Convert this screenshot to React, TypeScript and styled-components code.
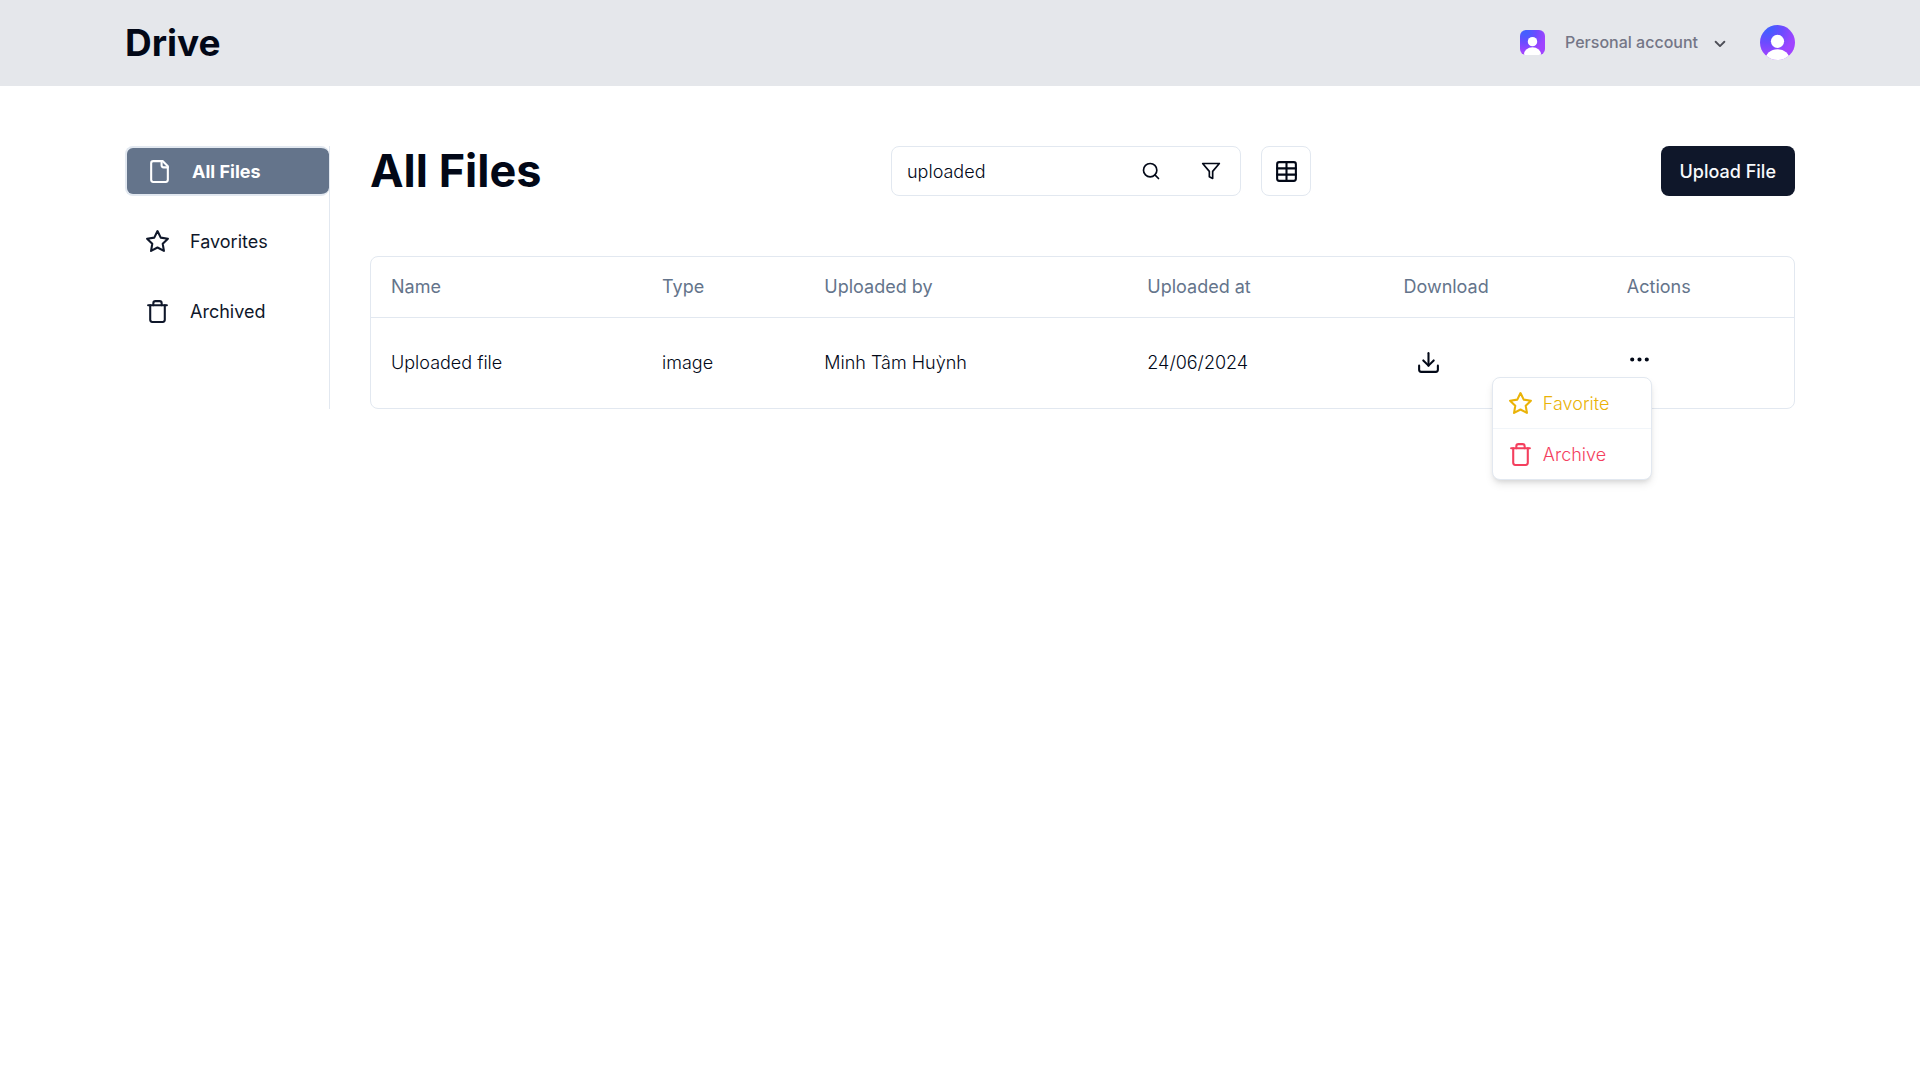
import React, { useId, useState } from "react";
import styled, { createGlobalStyle } from "styled-components";

const color = {
  ink: "#020817",
  navy: "#0f172a",
  slate: "#64748b",
  line: "#e2e8f0",
  faint: "#f1f5f9",
  header: "#e5e7eb",
  yellow: "#eab308",
  rose: "#f43f5e",
};

const GlobalStyle = createGlobalStyle`
  *, *::before, *::after { box-sizing: border-box; }
  body {
    margin: 0;
    background: #fff;
    color: ${color.ink};
    font-family: Inter, "Liberation Sans", sans-serif;
    font-size: 18px;
    line-height: 25px;
  }
  button, input { font: inherit; color: inherit; }
  button { cursor: pointer; }
  h1, ul { margin: 0; padding: 0; }
  svg { display: block; flex: none; }
`;

const Shell = styled.div`
  min-height: 100vh;
`;

const Container = styled.div`
  width: 100%;
  max-width: 1750px;
  margin: 0 auto;
  padding: 0 40px;
`;

const Header = styled.header`
  border-bottom: 1px solid ${color.header};
  background: ${color.header};
`;

const HeaderRow = styled(Container)`
  display: flex;
  align-items: center;
  justify-content: space-between;
  min-height: 85px;
`;

const Brand = styled.a`
  color: ${color.ink};
  font-size: 37px;
  font-weight: 700;
  line-height: 45px;
  text-decoration: none;
`;

const Account = styled.div`
  display: flex;
  align-items: center;
  gap: 25px;
`;

const BareButton = styled.button`
  display: inline-flex;
  align-items: center;
  padding: 0;
  border: 0;
  background: none;
`;

const AccountSwitch = styled(BareButton)`
  gap: 20px;
  padding: 5px;
  color: #747686;
  font-size: 16px;
  font-weight: 500;
`;

const AccountName = styled.span`
  display: flex;
  align-items: center;
  gap: 12px;
`;

const Picture = styled.span<{ $size: number; $radius: string }>`
  display: block;
  width: ${(p) => p.$size}px;
  height: ${(p) => p.$size}px;
  border-radius: ${(p) => p.$radius};
  overflow: hidden;
`;

const Page = styled(Container)`
  display: flex;
  gap: 40px;
  padding-top: 60px;
`;

const Sidebar = styled.nav`
  flex: none;
  width: 205px;
  border-right: 1px solid ${color.line};
`;

const NavList = styled.ul`
  display: grid;
  gap: 20px;
  list-style: none;
`;

const NavLink = styled.a<{ $active?: boolean }>`
  display: flex;
  align-items: center;
  gap: 20px;
  height: 50px;
  padding: 0 20px;
  border: ${(p) => (p.$active ? `2px solid ${color.line}` : "0")};
  border-right: 0;
  border-radius: 8px;
  background: ${(p) => (p.$active ? color.slate : "transparent")};
  color: ${(p) => (p.$active ? "#fff" : color.navy)};
  font-weight: ${(p) => (p.$active ? 700 : 400)};
  text-decoration: none;
`;

const Main = styled.main`
  flex: 1;
  min-width: 0;
`;

const Toolbar = styled.div`
  display: flex;
  align-items: center;
  justify-content: space-between;
  height: 50px;
  margin-bottom: 60px;
`;

const Title = styled.h1`
  font-size: 45px;
  font-weight: 700;
  line-height: 50px;
`;

const Tools = styled.div`
  display: flex;
  gap: 20px;
`;

const SearchBox = styled.form`
  display: flex;
  align-items: center;
  gap: 10px;
  width: 350px;
  height: 50px;
  padding: 0 4px 0 15px;
  border: 1px solid ${color.line};
  border-radius: 8px;
`;

const SearchInput = styled.input`
  flex: 1;
  min-width: 0;
  padding: 0;
  border: 0;
  outline: 0;
  background: none;
  font-weight: 300;
`;

const IconButton = styled(BareButton)<{ $outlined?: boolean }>`
  justify-content: center;
  width: 50px;
  height: 50px;
  border: ${(p) => (p.$outlined ? `1px solid ${color.line}` : "0")};
  border-radius: 8px;
`;

const UploadButton = styled(BareButton)`
  height: 50px;
  padding: 0 19px;
  border-radius: 8px;
  background: ${color.navy};
  color: #f8fafc;
  font-weight: 500;
`;

const TableFrame = styled.div`
  border: 1px solid ${color.line};
  border-radius: 8px;
`;

const FileTable = styled.table`
  width: 100%;
  border-collapse: separate;
  border-spacing: 0;
  table-layout: fixed;
`;

const Col = styled.col<{ $share: string }>`
  width: ${(p) => p.$share};
`;

const HeadCell = styled.th`
  height: 61px;
  padding: 0 20px 2px;
  border-bottom: 1px solid ${color.line};
  color: ${color.slate};
  font-weight: 400;
  text-align: left;
`;

const Cell = styled.td`
  height: 90px;
  padding: 0 20px 2px;
  font-weight: 300;
  text-align: left;
  vertical-align: middle;
`;

const MenuAnchor = styled.div`
  position: relative;
  display: flex;
  width: 25px;
  height: 30px;
`;

const MenuTrigger = styled(BareButton)`
  align-items: flex-start;
`;

const Menu = styled.div`
  position: absolute;
  top: 100%;
  right: 0;
  width: 160px;
  padding: 5px;
  border: 1px solid ${color.line};
  border-radius: 8px;
  background: #fff;
  box-shadow: 0 5px 8px -1px rgba(0, 0, 0, 0.1), 0 3px 5px -2px rgba(0, 0, 0, 0.1);
`;

const MenuItem = styled(BareButton)<{ $tone: string }>`
  display: flex;
  gap: 10px;
  width: 100%;
  height: 40px;
  padding: 0 10px;
  color: ${(p) => p.$tone};
  font-weight: 300;
`;

const MenuRule = styled.hr`
  height: 1px;
  margin: 5px -5px;
  border: 0;
  background: ${color.faint};
`;

type GlyphProps = { size?: number; children: React.ReactNode };

const Glyph = ({ size = 25, children }: GlyphProps) => (
  <svg
    width={size}
    height={size}
    viewBox="0 0 24 24"
    fill="none"
    stroke="currentColor"
    strokeWidth="2"
    strokeLinecap="round"
    strokeLinejoin="round"
    aria-hidden="true"
  >
    {children}
  </svg>
);

const FileIcon = () => (
  <Glyph>
    <path d="M15 2H6a2 2 0 0 0-2 2v16a2 2 0 0 0 2 2h12a2 2 0 0 0 2-2V7Z" />
    <path d="M14 2v4a2 2 0 0 0 2 2h4" />
  </Glyph>
);

const StarIcon = () => (
  <Glyph>
    <polygon points="12 2 15.09 8.26 22 9.27 17 14.14 18.18 21.02 12 17.77 5.82 21.02 7 14.14 2 9.27 8.91 8.26 12 2" />
  </Glyph>
);

const TrashIcon = () => (
  <Glyph>
    <path d="M3 6h18" />
    <path d="M19 6v14c0 1-1 2-2 2H7c-1 0-2-1-2-2V6" />
    <path d="M8 6V4c0-1 1-2 2-2h4c1 0 2 1 2 2v2" />
  </Glyph>
);

const SearchIcon = () => (
  <Glyph size={20}>
    <circle cx="11" cy="11" r="8" />
    <path d="m21 21-4.3-4.3" />
  </Glyph>
);

const FilterIcon = () => (
  <Glyph size={20}>
    <polygon points="22 3 2 3 10 12.46 10 19 14 21 14 12.46 22 3" />
  </Glyph>
);

const TableIcon = () => (
  <Glyph>
    <path d="M12 3v18" />
    <rect width="18" height="18" x="3" y="3" rx="2" />
    <path d="M3 9h18" />
    <path d="M3 15h18" />
  </Glyph>
);

const DownloadIcon = () => (
  <Glyph>
    <path d="M21 15v4a2 2 0 0 1-2 2H5a2 2 0 0 1-2-2v-4" />
    <polyline points="7 10 12 15 17 10" />
    <line x1="12" x2="12" y1="15" y2="3" />
  </Glyph>
);

const DotsIcon = () => (
  <Glyph>
    <circle cx="12" cy="12" r="1" fill="currentColor" />
    <circle cx="19" cy="12" r="1" fill="currentColor" />
    <circle cx="5" cy="12" r="1" fill="currentColor" />
  </Glyph>
);

const ChevronIcon = () => (
  <svg width="20" height="20" viewBox="0 0 16 16" fill="none" stroke="#4d4f57" strokeWidth="1.5" strokeLinecap="round" strokeLinejoin="round" aria-hidden="true">
    <path d="m4.5 7 3.5 3.5L11.5 7" />
  </svg>
);

const Avatar = ({ size, radius }: { size: number; radius: string }) => {
  const id = useId();
  return (
    <Picture $size={size} $radius={radius}>
      <svg width={size} height={size} viewBox="0 0 35 35" aria-hidden="true">
        <defs>
          <radialGradient id={id} cx="0.22" cy="0.08" r="0.95">
            <stop offset="0.1" stopColor="#455eff" />
            <stop offset="0.45" stopColor="#6c4bff" />
            <stop offset="0.85" stopColor="#a044ff" />
          </radialGradient>
        </defs>
        <rect width="35" height="35" fill={`url(#${id})`} />
        <circle cx="17.5" cy="16.3" r="6.6" fill="#fff" />
        <ellipse cx="17.5" cy="35" rx="12.2" ry="10.8" fill="#fff" />
      </svg>
    </Picture>
  );
};

const columns = [
  { label: "Name", share: "19.05%" },
  { label: "Type", share: "11.4%" },
  { label: "Uploaded by", share: "22.7%" },
  { label: "Uploaded at", share: "18%" },
  { label: "Download", share: "15.7%" },
  { label: "Actions", share: "13.15%" },
];

const sections = [
  { label: "All Files", Icon: FileIcon },
  { label: "Favorites", Icon: StarIcon },
  { label: "Archived", Icon: TrashIcon },
];

export default function App() {
  const [query, setQuery] = useState("uploaded");
  const [menuOpen, setMenuOpen] = useState(true);

  return (
    <Shell>
      <GlobalStyle />
      <Header>
        <HeaderRow>
          <Brand href="#">Drive</Brand>
          <Account>
            <AccountSwitch type="button" aria-haspopup="menu">
              <Avatar size={25} radius="6px" />
              <AccountName>
                Personal account
                <ChevronIcon />
              </AccountName>
            </AccountSwitch>
            <BareButton type="button" aria-label="Open user menu">
              <Avatar size={35} radius="50%" />
            </BareButton>
          </Account>
        </HeaderRow>
      </Header>

      <Page>
        <Sidebar aria-label="Files">
          <NavList>
            {sections.map(({ label, Icon }, i) => (
              <li key={label}>
                <NavLink href="#" $active={i === 0} aria-current={i === 0 ? "page" : undefined}>
                  <Icon />
                  {label}
                </NavLink>
              </li>
            ))}
          </NavList>
        </Sidebar>

        <Main>
          <Toolbar>
            <Title>All Files</Title>
            <Tools>
              <SearchBox role="search" onSubmit={(e) => e.preventDefault()}>
                <SearchInput
                  type="text"
                  aria-label="Search files"
                  value={query}
                  onChange={(e) => setQuery(e.target.value)}
                />
                <IconButton type="submit" aria-label="Search">
                  <SearchIcon />
                </IconButton>
                <IconButton type="button" aria-label="Filter">
                  <FilterIcon />
                </IconButton>
              </SearchBox>
              <IconButton type="button" $outlined aria-label="Table view">
                <TableIcon />
              </IconButton>
            </Tools>
            <UploadButton type="button">Upload File</UploadButton>
          </Toolbar>

          <TableFrame>
            <FileTable>
              <colgroup>
                {columns.map((c) => (
                  <Col key={c.label} $share={c.share} />
                ))}
              </colgroup>
              <thead>
                <tr>
                  {columns.map((c) => (
                    <HeadCell key={c.label} scope="col">
                      {c.label}
                    </HeadCell>
                  ))}
                </tr>
              </thead>
              <tbody>
                <tr>
                  <Cell>Uploaded file</Cell>
                  <Cell>image</Cell>
                  <Cell>Minh Tâm Huỳnh</Cell>
                  <Cell>24/06/2024</Cell>
                  <Cell>
                    <IconButton type="button" aria-label="Download">
                      <DownloadIcon />
                    </IconButton>
                  </Cell>
                  <Cell>
                    <MenuAnchor>
                      <MenuTrigger
                        type="button"
                        aria-label="File actions"
                        aria-expanded={menuOpen}
                        onClick={() => setMenuOpen(!menuOpen)}
                      >
                        <DotsIcon />
                      </MenuTrigger>
                      {menuOpen && (
                        <Menu role="menu">
                          <MenuItem type="button" role="menuitem" $tone={color.yellow}>
                            <StarIcon />
                            Favorite
                          </MenuItem>
                          <MenuRule />
                          <MenuItem type="button" role="menuitem" $tone={color.rose}>
                            <TrashIcon />
                            Archive
                          </MenuItem>
                        </Menu>
                      )}
                    </MenuAnchor>
                  </Cell>
                </tr>
              </tbody>
            </FileTable>
          </TableFrame>
        </Main>
      </Page>
    </Shell>
  );
}
